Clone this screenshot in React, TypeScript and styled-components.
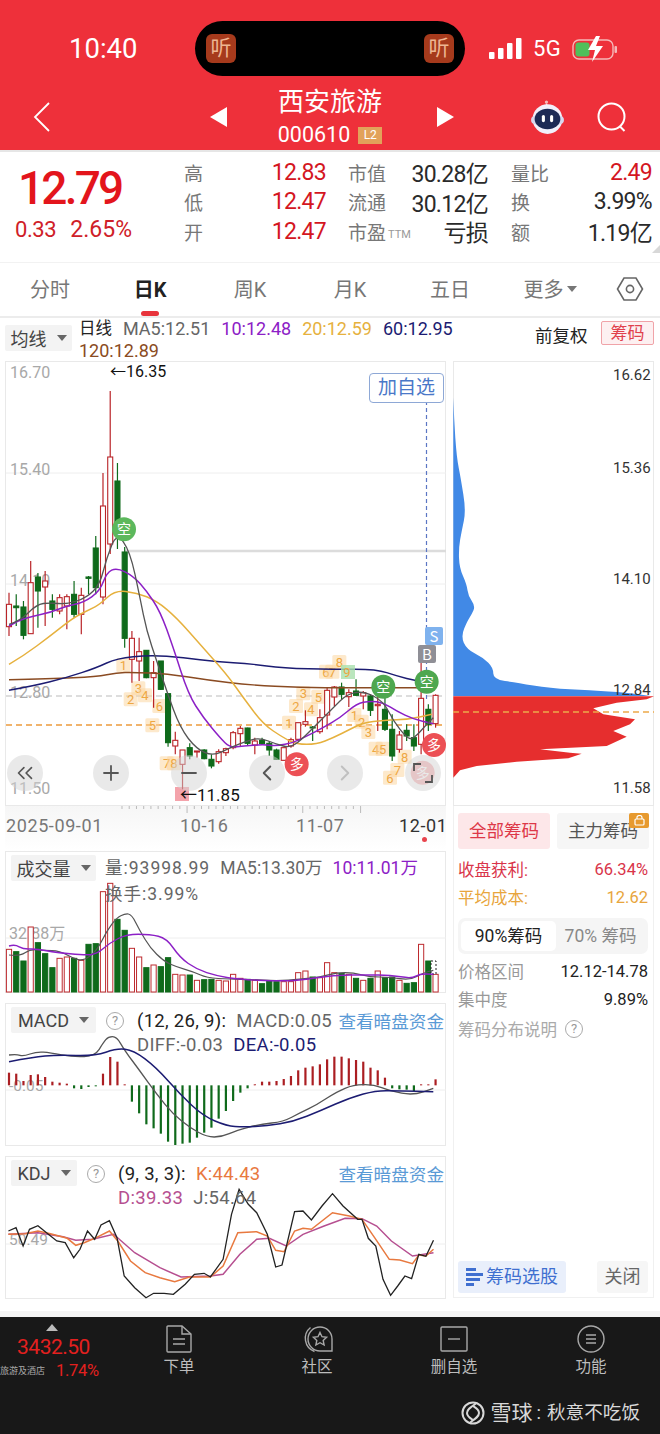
import React from "react";
import styled, { createGlobalStyle } from "styled-components";
import { ChevronLeft, ChevronRight, ChevronsLeft, Plus, Minus } from "lucide-react";

const GlobalStyle = createGlobalStyle`
  html, body { margin: 0; padding: 0; background: #fff; }
  * { box-sizing: border-box; }
  body { font-family: Roboto, "Noto Sans CJK SC", sans-serif; }
`;

const RED = "#b92428";
const GREEN = "#0f6a1b";

// [high, top, bottom, low, isRed], traced at 3x with y relative to 580
const candles: [number, number, number, number, number][] = [
  [35, 70, 137, 165, 1], [40, 75, 80, 135, 0], [60, 78, 163, 175, 0], [-60, 5, 158, 158, 1],
  [-24, -12, 30, 140, 0], [-30, 0, 18, 135, 1], [40, 60, 85, 110, 0], [40, 50, 90, 100, 1],
  [40, 47, 75, 145, 1], [0, 40, 100, 110, 0], [20, 43, 100, 160, 1], [-15, -12, -8, 40, 0],
  [-135, -99, 20, 40, 0], [-324, -225, 48, 70, 1], [-570, -372, -111, -81, 1], [-354, -300, -159, -96, 0],
  [-102, -87, 172, 200, 0], [150, 172, 235, 305, 1], [170, 212, 240, 300, 1], [208, 208, 290, 292, 0],
  [240, 275, 290, 380, 1], [240, 240, 325, 327, 0], [338, 338, 485, 497, 0], [452, 478, 495, 520, 1],
  [507, 507, 550, 625, 1], [487, 500, 525, 535, 0], [510, 510, 513, 530, 1], [505, 507, 533, 535, 0],
  [520, 535, 555, 562, 0], [505, 512, 542, 548, 1], [500, 503, 515, 525, 1], [450, 455, 500, 505, 1],
  [435, 442, 458, 495, 1], [440, 441, 487, 495, 0], [470, 480, 492, 520, 1], [470, 478, 488, 492, 0],
  [480, 487, 507, 525, 0], [503, 507, 535, 537, 0], [500, 500, 538, 538, 1], [470, 476, 495, 500, 1],
  [425, 425, 475, 480, 1], [388, 422, 430, 437, 1], [435, 438, 440, 480, 0], [385, 410, 452, 458, 1],
  [320, 328, 402, 445, 1], [315, 318, 348, 375, 1], [305, 318, 340, 355, 0], [325, 335, 347, 378, 1],
  [295, 330, 343, 345, 0], [330, 335, 345, 385, 1], [340, 345, 388, 405, 0], [345, 370, 374, 450, 1],
  [350, 385, 445, 450, 0], [400, 445, 525, 540, 0], [450, 462, 505, 515, 1], [430, 448, 465, 480, 0],
  [430, 470, 495, 510, 0], [220, 352, 490, 520, 1], [370, 385, 430, 450, 0], [340, 343, 428, 440, 1],
];

const ma5 = [27,130,60,120,110,70,150,65,200,70,260,50,300,10,320,-70,350,-145,390,-90,420,50,440,150,470,240,500,330,540,440,590,505,640,525,690,500,740,480,780,470,830,490,870,500,900,480,950,430,1000,380,1040,340,1090,330,1150,360,1180,420,1220,470,1240,475,1280,430,1300,410];
const ma10 = [27,135,50,120,100,105,150,95,200,75,250,65,300,30,320,-25,350,-40,400,-15,440,30,480,90,520,200,565,340,610,410,660,470,690,500,730,495,790,490,830,495,880,485,920,465,970,440,1020,410,1070,368,1110,360,1150,365,1190,390,1240,415,1300,428];
const ma20 = [27,250,70,225,150,165,220,110,270,85,300,70,345,28,410,35,470,60,530,110,600,190,680,280,730,350,790,430,850,470,890,490,950,490,1000,470,1050,445,1090,425,1150,418,1230,415,1295,400];
const ma60 = [27,328,100,315,200,290,290,260,350,232,450,222,550,230,650,242,750,248,850,262,1000,265,1130,265,1190,285,1250,300,1300,305];
const ma120 = [27,296,150,293,290,288,350,275,400,274,500,278,620,297,750,312,900,320,1050,320,1300,320];

const tags: [number, number, string][] = [
  [370,252,"1"],[415,322,"3"],[392,355,"2"],[435,343,"4"],[478,375,"6"],[457,433,"5"],[500,547,"7"],[522,547,"8"],
  [867,425,"1"],[888,375,"2"],[910,337,"3"],[933,385,"4"],[955,347,"5"],[978,272,"6"],[997,272,"7"],[1018,243,"8"],
  [1063,402,"1"],[1085,422,"2"],[1105,453,"3"],[1127,503,"4"],[1148,503,"5"],[1170,590,"6"],[1192,567,"7"],[1214,527,"8"],
];

const volumes: [number, number][] = [
  [295,1],[302,0],[330,0],[228,1],[275,0],[308,0],[350,0],[322,1],[318,1],[322,0],[328,1],[280,0],[278,0],[122,1],[97,1],
  [205,0],[238,0],[292,1],[318,1],[350,0],[342,1],[347,0],[320,0],[370,1],[372,1],[372,0],[388,1],[386,0],[385,0],[388,1],
  [390,1],[370,1],[382,1],[385,0],[388,1],[398,0],[390,0],[392,0],[392,1],[392,1],[365,1],[360,1],[378,0],[380,1],[335,1],
  [365,1],[367,0],[370,1],[382,0],[388,1],[382,0],[360,1],[380,0],[378,0],[388,1],[397,0],[395,0],[280,1],[330,0],[370,1],
];
const volMa5 = [27,312,60,316,90,295,130,298,180,300,220,322,250,330,290,300,320,240,350,200,375,188,395,190,420,240,450,290,490,330,530,348,580,362,620,380,690,385,750,385,830,390,900,385,960,378,1010,365,1060,365,1110,378,1170,378,1230,388,1270,365,1300,358];
const volMa10 = [27,285,45,280,70,295,110,293,170,305,250,312,290,310,330,275,380,250,450,250,500,262,540,320,590,355,650,375,720,385,830,390,900,388,1000,372,1100,372,1170,372,1235,383,1260,368,1300,370];

const macdBars = [665,668,690,672,670,678,692,695,698,712,714,708,706,668,618,632,700,752,787,820,832,848,872,882,878,875,860,845,830,803,780,750,725,712,700,692,692,690,684,675,658,650,646,640,625,617,617,622,627,632,650,658,680,712,715,716,720,700,700,685];
const diff = [27,612,50,610,70,616,110,602,150,605,220,618,285,615,310,575,325,557,350,557,375,600,420,660,470,730,520,790,570,830,620,858,665,858,710,838,780,820,850,812,900,785,950,762,1010,722,1060,702,1120,700,1170,720,1240,733,1300,712];
const dea = [27,632,100,618,170,612,285,615,350,592,400,597,470,650,540,730,610,795,680,825,730,828,800,825,880,812,960,780,1050,740,1130,718,1200,720,1300,722];

const kdjJ = [20,240,38,230,55,285,70,235,90,224,115,250,135,270,155,275,175,320,190,295,208,240,225,265,240,222,260,209,278,260,295,375,320,410,347,440,365,427,390,427,412,430,440,400,462,370,485,367,500,378,530,325,550,190,568,115,590,160,610,185,635,250,655,348,670,342,700,182,720,180,740,207,765,165,790,128,815,165,850,205,860,205,875,262,893,285,910,385,928,433,945,405,962,375,978,383,995,310,1012,316,1030,268];
const kdjK = [20,250,60,248,90,240,120,248,160,262,180,283,200,275,225,262,260,240,280,270,310,330,345,365,380,380,415,392,450,378,500,378,530,345,565,245,610,242,635,255,655,298,675,302,700,240,720,232,740,235,790,185,830,195,860,205,890,260,925,325,950,327,980,338,995,312,1012,315,1030,295];
const kdjD = [20,250,90,245,150,257,180,268,220,265,270,250,320,305,380,350,430,378,500,375,530,370,570,310,610,265,640,262,680,285,720,250,770,225,820,202,860,203,895,225,930,270,980,315,1030,305];

const chipBlue = [10,140,12,200,20,320,32,380,48,480,35,540,26,590,28,650,50,700,55,735,76,765,65,790,52,810,33,855,50,895,100,920,130,950,130,985,200,995,300,1012,420,1018,530,1025,600,1035];
const chipRed = [10,1036,612,1036,590,1045,500,1055,430,1072,460,1090,555,1105,540,1120,490,1140,530,1157,470,1185,270,1195,360,1205,395,1208,355,1222,200,1232,80,1245,30,1258,10,1280];

// turns a flat list of zoomed coordinates into page coordinates
const toXY = (list: number[], baseY: number, baseX = 0, sx = 3) => {
  const out: [number, number][] = [];
  for (let i = 0; i < list.length; i += 2) {
    out.push([baseX + list[i] / sx, baseY + list[i + 1] / 3]);
  }
  return out;
};

const toPts = (list: number[], baseY: number, baseX = 0, sx = 3) =>
  toXY(list, baseY, baseX, sx).map(([x, y]) => `${x.toFixed(1)},${y.toFixed(1)}`).join(" ");

// quadratic smoothing through midpoints, the MA lines are curves
const smooth = (list: number[], baseY: number, baseX = 0) => {
  const p = toXY(list, baseY, baseX);
  let d = `M${p[0][0].toFixed(1)} ${p[0][1].toFixed(1)}`;
  for (let i = 1; i < p.length - 1; i++) {
    const mx = (p[i][0] + p[i + 1][0]) / 2;
    const my = (p[i][1] + p[i + 1][1]) / 2;
    d += ` Q${p[i][0].toFixed(1)} ${p[i][1].toFixed(1)} ${mx.toFixed(1)} ${my.toFixed(1)}`;
  }
  const last = p[p.length - 1];
  return `${d} L${last[0].toFixed(1)} ${last[1].toFixed(1)}`;
};

const slotX = (i: number) => 9 + 7.23 * i;
const y3 = (z: number) => 580 + z / 3;

const Page = styled.div`
  width: 660px;
  height: 1434px;
  display: flex;
  flex-direction: column;
  background: #fff;
  overflow: hidden;
  color: #333;
`;

const Header = styled.header`
  height: 150px;
  background: #ee303a;
  color: #fff;
  display: flex;
  flex-direction: column;
  flex-shrink: 0;
`;

const StatusBar = styled.div`
  display: grid;
  grid-template-columns: 195px 270px 1fr;
  align-items: center;
  padding-top: 21px;
  height: 76px;
`;

const Clock = styled.div`
  padding-left: 69px;
  font-size: 27.5px;
`;

const Island = styled.div`
  height: 55px;
  border-radius: 28px;
  background: #000;
  display: flex;
  align-items: center;
  justify-content: space-between;
  padding: 0 11px;
`;

const ListenChip = styled.span`
  width: 30px;
  height: 29px;
  border-radius: 6px;
  background: #a63a1c;
  color: #eeb592;
  font-size: 21px;
  line-height: 29px;
  text-align: center;
`;

const StatusRight = styled.div`
  display: flex;
  align-items: center;
  padding-left: 24px;
  font-size: 22px;
  letter-spacing: 0.5px;
`;

const FiveG = styled.span`
  margin: 0 11px 0 11px;
`;

const NavRow = styled.div`
  flex: 1;
  display: grid;
  grid-template-columns: 235px 190px 1fr;
  align-items: center;
`;

const NavSide = styled.div<{ $end?: boolean }>`
  display: flex;
  align-items: center;
  justify-content: ${(p) => (p.$end ? "flex-start" : "space-between")};
  padding: ${(p) => (p.$end ? "8px 0 0 12px" : "8px 8px 0 32px")};
`;

const Arrow = styled.span<{ $right?: boolean }>`
  width: 0;
  height: 0;
  border-top: 10px solid transparent;
  border-bottom: 10px solid transparent;
  ${(p) => (p.$right ? "border-left: 17px solid #fff;" : "border-right: 17px solid #fff;")}
`;

const TitleBlock = styled.div`
  display: flex;
  flex-direction: column;
  align-items: center;
  margin-top: 6px;
`;

const Title = styled.div`
  font-size: 26px;
  line-height: 36px;
  white-space: nowrap;
`;

const CodeRow = styled.div`
  display: flex;
  align-items: center;
  gap: 8px;
  font-size: 21.5px;
  line-height: 26px;
  margin-top: 2px;
  white-space: nowrap;
`;

const L2 = styled.span`
  background: #e2a25a;
  color: #fff;
  width: 24px;
  height: 17px;
  line-height: 17px;
  font-size: 12px;
  text-align: center;
`;

const NavIcons = styled.div`
  display: flex;
  align-items: center;
  gap: 31px;
  margin-left: 75px;
`;

const QuoteRow = styled.section`
  height: 105px;
  border-top: 2px solid #e6e6e6;
  display: grid;
  grid-template-columns: 184px 164px 163px 1fr;
  flex-shrink: 0;
  position: relative;
`;

const PriceBlock = styled.div`
  display: flex;
  flex-direction: column;
  padding: 7px 0 0 15px;
  color: #e3151c;
`;

const BigPrice = styled.div`
  font-size: 46px;
  line-height: 58px;
  font-weight: 500;
  letter-spacing: -2.8px;
  margin-left: 3px;
`;

const Change = styled.div`
  display: flex;
  gap: 14px;
  font-size: 22px;
  line-height: 26px;
  color: #cf2028;
`;

const ChangePct = styled.span`
  font-size: 23px;
`;

const ChangeVal = styled.span`
  letter-spacing: -0.4px;
`;

const QuoteCol = styled.div`
  display: grid;
  grid-auto-rows: 29.5px;
  padding-top: 5.5px;
`;

const QuoteCell = styled.div<{ $pad?: number }>`
  display: flex;
  justify-content: space-between;
  align-items: center;
  padding-right: ${(p) => p.$pad ?? 22}px;
`;

const QuoteLabel = styled.span`
  font-size: 19px;
  color: #777;
  display: flex;
  align-items: flex-end;
`;

const Ttm = styled.span`
  font-size: 11px;
  line-height: 20px;
  margin-left: 2px;
  color: #999;
`;

const QuoteValue = styled.span<{ $red?: boolean }>`
  font-size: 23px;
  letter-spacing: -0.7px;
  color: ${(p) => (p.$red ? "#d4161f" : "#2a2a2a")};
`;

const Corner = styled.span`
  position: absolute;
  right: 0;
  bottom: 2px;
  width: 0;
  height: 0;
  border-left: 8px solid transparent;
  border-bottom: 8px solid #d8d8d8;
`;

const Tabs = styled.nav`
  margin-top: 7px;
  border-top: 1px solid #f2f2f2;
  border-bottom: 2px solid #ececec;
  height: 56px;
  display: grid;
  grid-template-columns: repeat(6, 100px) 1fr;
  align-items: center;
  flex-shrink: 0;
`;

const Tab = styled.div<{ $active?: boolean }>`
  position: relative;
  height: 100%;
  display: flex;
  align-items: center;
  justify-content: center;
  padding-bottom: 2px;
  font-size: 20px;
  color: ${(p) => (p.$active ? "#222" : "#777")};
  font-weight: ${(p) => (p.$active ? 700 : 400)};
  ${(p) =>
    p.$active &&
    `&::after { content: ""; position: absolute; left: 41px; bottom: 0; width: 18px; height: 5px; border-radius: 3px; background: #e8343c; }`}
`;

const Caret = styled.span<{ $dark?: boolean }>`
  display: inline-block;
  width: 0;
  height: 0;
  margin-left: ${(p) => (p.$dark ? 10 : 3)}px;
  border-left: 5px solid transparent;
  border-right: 5px solid transparent;
  border-top: 6px solid ${(p) => (p.$dark ? "#666" : "#777")};
`;

const Legend = styled.div`
  display: grid;
  grid-template-columns: 74px 456px 66px 1fr;
  padding-left: 5px;
  height: 43px;
  flex-shrink: 0;
`;

const Dropdown = styled.div<{ $w: number }>`
  width: ${(p) => p.$w}px;
  height: 26px;
  background: #f3f3f3;
  border-radius: 2px;
  display: flex;
  align-items: center;
  justify-content: center;
  font-size: 18px;
  color: #444;
  position: relative;
  flex-shrink: 0;
`;

const LegendDrop = styled(Dropdown)`
  margin-top: 7px;
`;

const LegendText = styled.div`
  display: flex;
  flex-wrap: wrap;
  column-gap: 11px;
  font-size: 18px;
  line-height: 21px;
`;

const Num = styled.span<{ $c?: string }>`
  color: ${(p) => p.$c ?? "#666"};
  white-space: nowrap;
`;

const LineKind = styled.span`
  color: #222;
  font-size: 16.5px;
  white-space: nowrap;
`;

const Restore = styled.div`
  font-size: 17.5px;
  color: #222;
  padding-top: 4px;
`;

const ChipBtn = styled.div`
  width: 53px;
  height: 24px;
  margin-top: 3px;
  border: 1px solid #f0a3a8;
  border-radius: 2px;
  background: #fdf0f1;
  color: #e0414c;
  font-size: 17px;
  line-height: 22px;
  text-align: center;
`;

const Board = styled.main`
  flex: 1;
  display: grid;
  grid-template-columns: 441px 201px;
  column-gap: 7px;
  padding-left: 5px;
`;

const LeftCol = styled.div`
  display: flex;
  flex-direction: column;
`;

const Panel = styled.section<{ $h: number }>`
  position: relative;
  height: ${(p) => p.$h}px;
  flex-shrink: 0;
  border: 1px solid #e9e9e9;
`;

const ChartSvg = styled.svg`
  position: absolute;
  left: -1px;
  top: -1px;
  display: block;
`;

const AxisLabel = styled.text<{ $c?: string; $s?: number }>`
  fill: ${(p) => p.$c ?? "#a8a8a8"};
  font-size: ${(p) => p.$s ?? 16}px;
  font-family: Roboto, "Noto Sans CJK SC", sans-serif;
`;

const TagLabel = styled.text`
  fill: #eea743;
  font-size: 13px;
  text-anchor: middle;
  font-family: Roboto, sans-serif;
`;

const BadgeLabel = styled.text<{ $s?: number }>`
  fill: #fff;
  font-size: ${(p) => p.$s ?? 14}px;
  text-anchor: middle;
  font-family: "Noto Sans CJK SC", sans-serif;
`;

const WatchBtn = styled.div`
  position: absolute;
  right: 1px;
  top: 11px;
  width: 75px;
  height: 30px;
  border: 1px solid #8ea8d6;
  border-radius: 4px;
  background: #fff;
  color: #4a78c8;
  font-size: 19px;
  line-height: 28px;
  text-align: center;
`;

const ZoomBar = styled.div`
  position: absolute;
  left: 1px;
  top: 393px;
  width: 434px;
  display: grid;
  grid-template-columns: 86px repeat(4, 78px) 36px;
`;

const RoundBtn = styled.div<{ $dim?: boolean }>`
  width: 36px;
  height: 36px;
  border-radius: 50%;
  background: rgba(212, 212, 212, 0.5);
  color: ${(p) => (p.$dim ? "#c0c0c0" : "#555")};
  display: flex;
  align-items: center;
  justify-content: center;
`;

const DateAxis = styled.div`
  height: 45px;
  flex-shrink: 0;
  position: relative;
  background: linear-gradient(180deg, #f6f6f6 0, #fff 100%);
`;

const TickSvg = styled.svg`
  display: block;
`;

const DateRow = styled.div`
  display: grid;
  grid-template-columns: 174px 116px 103px 1fr;
  padding-left: 1px;
  margin-top: -2px;
  font-size: 18px;
  letter-spacing: 0.6px;
  line-height: 24px;
  color: #777;
`;

const DateLabel = styled.span<{ $dark?: boolean }>`
  color: ${(p) => (p.$dark ? "#333" : "#777")};
  white-space: nowrap;
`;

const NowDot = styled.span`
  position: absolute;
  left: 417px;
  top: 31px;
  width: 5px;
  height: 5px;
  border-radius: 50%;
  background: #e8434c;
`;

const PanelHead = styled.div`
  position: relative;
  display: flex;
  padding: 3px 0 0 5px;
`;

const IndicatorText = styled.div`
  font-size: 17.5px;
  line-height: 24px;
  display: flex;
  flex-wrap: wrap;
  column-gap: 10px;
`;

const VolumeText = styled(IndicatorText)`
  padding-left: 9px;
  width: 330px;
  color: #666;
  line-height: 26px;
`;

const Spaced = styled.span`
  letter-spacing: 1px;
  white-space: nowrap;
`;

const HelpDot = styled.span`
  width: 18px;
  height: 18px;
  border: 1.5px solid #aaa;
  border-radius: 50%;
  color: #999;
  font-size: 13px;
  line-height: 15px;
  text-align: center;
  flex-shrink: 0;
`;

const HeadHelp = styled(HelpDot)`
  margin: 5px 13px 0 10px;
`;

const ParamText = styled(IndicatorText)`
  width: 205px;
  padding-top: 2px;
  font-size: 18.5px;
  letter-spacing: 0.3px;
`;

const DarkLink = styled.a`
  position: absolute;
  top: 6px;
  right: 1px;
  font-size: 17.6px;
  line-height: 24px;
  color: #5a9ad6;
`;

const GapPanel = styled(Panel)`
  margin-top: 10px;
`;

const RightCol = styled.aside`
  display: flex;
  flex-direction: column;
`;

const Controls = styled.section`
  flex: 1;
  position: relative;
  border: 1px solid #f0f0f0;
  border-top: 0;
  margin-bottom: 13px;
  padding: 7px 5px 0 4px;
  display: flex;
  flex-direction: column;
`;

const ChipTabs = styled.div`
  display: grid;
  grid-template-columns: 92px 92px;
  column-gap: 7px;
  margin-bottom: 6px;
`;

const ChipTab = styled.div<{ $on?: boolean }>`
  position: relative;
  height: 36px;
  border-radius: 3px;
  background: ${(p) => (p.$on ? "#fde7e9" : "#f6f6f6")};
  color: ${(p) => (p.$on ? "#dd3848" : "#555")};
  font-size: 17.5px;
  line-height: 36px;
  text-align: center;
`;

const Lock = styled.span`
  position: absolute;
  right: 0;
  top: 0;
  width: 20px;
  height: 15px;
  background: #e79a2f;
  border-radius: 2px;
  display: flex;
  align-items: center;
  justify-content: center;
`;

const StatRow = styled.div<{ $c: string }>`
  display: flex;
  justify-content: space-between;
  align-items: center;
  height: 28px;
  font-size: 16.5px;
  color: ${(p) => p.$c};
`;

const Segment = styled.div`
  margin-top: 7px;
  margin-bottom: 3px;
  height: 36px;
  background: #f5f5f5;
  border-radius: 7px;
  display: grid;
  grid-template-columns: 95px 1fr;
  padding: 3px;
  font-size: 17.5px;
  text-align: center;
`;

const SegmentItem = styled.div<{ $on?: boolean }>`
  border-radius: 5px;
  background: ${(p) => (p.$on ? "#fff" : "transparent")};
  color: ${(p) => (p.$on ? "#222" : "#888")};
  line-height: 30px;
`;

const InfoRow = styled.div`
  display: flex;
  justify-content: space-between;
  align-items: center;
  height: 28px;
  font-size: 16.5px;
  color: #222;
`;

const InfoLabel = styled.span`
  color: #999;
`;

const NoteRow = styled.div`
  display: flex;
  align-items: center;
  gap: 8px;
  height: 30px;
  margin-top: 1px;
  font-size: 16.5px;
  color: #aaa;
`;

const ControlsFoot = styled.div`
  margin-top: auto;
  margin-bottom: 4px;
  display: flex;
  justify-content: space-between;
`;

const PickBtn = styled.div`
  width: 108px;
  height: 32px;
  background: #e9effb;
  border-radius: 3px;
  color: #3f6fd0;
  font-size: 18px;
  line-height: 32px;
  display: flex;
  align-items: center;
  justify-content: center;
  gap: 2px;
`;

const CloseBtn = styled.div`
  width: 51px;
  height: 32px;
  background: #f6f6f6;
  border-radius: 3px;
  color: #666;
  font-size: 18px;
  line-height: 32px;
  text-align: center;
`;

const BottomGap = styled.div`
  height: 6px;
  flex-shrink: 0;
  background: #f4f4f4;
`;

const BottomBar = styled.footer`
  height: 117px;
  flex-shrink: 0;
  background: #181818;
  color: #bdbdbd;
`;

const BarGrid = styled.div`
  display: grid;
  grid-template-columns: 110px 138px 138px 136px 1fr;
  height: 74px;
`;

const IndexCell = styled.div`
  display: flex;
  flex-direction: column;
  align-items: center;
  padding-top: 7px;
`;

const IndexUp = styled.span`
  width: 0;
  height: 0;
  border-left: 6px solid transparent;
  border-right: 6px solid transparent;
  border-bottom: 7px solid #bbb;
  margin-left: -6px;
`;

const IndexValue = styled.div`
  font-size: 21px;
  line-height: 26px;
  color: #e3201f;
  margin-top: 3px;
  margin-left: -3px;
  letter-spacing: -0.5px;
`;

const IndexFoot = styled.div`
  display: flex;
  align-items: center;
  gap: 11px;
  align-self: flex-start;
  margin-top: 1px;
`;

const IndexName = styled.span`
  font-size: 9px;
  color: #aaa;
  white-space: nowrap;
`;

const IndexPct = styled.span`
  font-size: 16.5px;
  color: #e3201f;
  letter-spacing: -0.3px;
`;

const BarItem = styled.div`
  display: flex;
  flex-direction: column;
  align-items: center;
  padding-top: 8px;
  font-size: 15.5px;
  line-height: 22px;
  gap: 3px;
`;

const BarIconBox = styled.div`
  height: 28px;
  display: flex;
  align-items: center;
`;

const Watermark = styled.div`
  display: flex;
  justify-content: flex-end;
  align-items: center;
  padding: 9px 20px 0 0;
  font-size: 18.6px;
  line-height: 26px;
  color: #d8d8d8;
`;

const Brand = styled.span`
  font-size: 21px;
  margin-left: 6px;
`;

const WatermarkSep = styled.span`
  margin: 0 6px 0 4px;
`;

const Robot = () => (
  <svg width="37" height="36" viewBox="0 0 36 34">
    <circle cx="17" cy="2.5" r="1.6" fill="#f4b8b8" />
    <path d="M17 4v3" stroke="#f4d4d4" strokeWidth="1.4" />
    <circle cx="18" cy="19" r="14.5" fill="#f1f0fb" />
    <rect x="2" y="16" width="32" height="8" rx="4" fill="#d9d8ee" />
    <ellipse cx="18" cy="19" rx="12.500" ry="10" fill="#1d2a55" />
    <rect x="12.500" y="15" width="3" height="7" rx="1.500" fill="#fff" />
    <rect x="20.500" y="15" width="3" height="7" rx="1.500" fill="#fff" />
  </svg>
);

const SearchIcon = () => (
  <svg width="31" height="30" viewBox="0 0 31 30" fill="none" stroke="#fff" strokeWidth="2">
    <circle cx="14.500" cy="14.500" r="13" />
    <path d="M23 24.500l4.500 4.500" />
  </svg>
);

const BackIcon = () => (
  <svg width="18" height="32" viewBox="0 0 18 32" fill="none" stroke="#fff" strokeWidth="1.800">
    <path d="M17 2L3 16l14 14" />
  </svg>
);

const SignalIcon = () => (
  <svg width="33" height="21" viewBox="0 0 33 21" fill="#fff">
    <rect x="0" y="14" width="5.500" height="7" rx="1" />
    <rect x="9" y="10" width="5.500" height="11" rx="1" />
    <rect x="18" y="5" width="5.500" height="16" rx="1" />
    <rect x="27" y="0" width="5.500" height="21" rx="1" />
  </svg>
);

const BatteryIcon = () => (
  <svg width="46" height="28" viewBox="0 0 46 28">
    <rect x="1" y="5" width="40" height="19" rx="6" fill="none" stroke="#f5b8b8" strokeWidth="1.400" />
    <rect x="3.500" y="7.500" width="14" height="14" rx="3" fill="#4fc05a" />
    <rect x="42.500" y="11" width="2.500" height="7" rx="1" fill="#f5b8b8" />
    <path d="M24 1l-8 14h7l-3 12 11-16h-7l4-10z" fill="#fff" />
  </svg>
);

const HexIcon = () => (
  <svg width="28" height="26" viewBox="0 0 28 26" fill="none" stroke="#666" strokeWidth="1.600">
    <path d="M8 2h12l6.500 11L20 24H8L1.500 13z" />
    <circle cx="14" cy="13" r="3.600" />
  </svg>
);

const Tag = ({ x, y, t }: { x: number; y: number; t: string }) => (
  <g>
    <rect x={x / 3 - 7} y={y3(y) - 7} width="14" height="14" rx="1.500" fill="#fbd39a" opacity="0.5" />
    <TagLabel x={x / 3} y={y3(y) + 5}>{t}</TagLabel>
  </g>
);

const Badge = ({ x, y, c, t, o = 1 }: { x: number; y: number; c: string; t: string; o?: number }) => (
  <g opacity={o}>
    <circle cx={x / 3} cy={y3(y)} r="12" fill={c} />
    <BadgeLabel x={x / 3} y={y3(y) + 5}>{t}</BadgeLabel>
  </g>
);

const MainChart = () => (
  <ChartSvg width="441" height="445" viewBox="5 360 441 445">
    <line x1="6" x2="446" y1="472" y2="472" stroke="#eee" />
    <line x1="6" x2="446" y1="583" y2="583" stroke="#eee" />
    <line x1="125" x2="446" y1="550" y2="550" stroke="#dcdcdc" strokeWidth="2.500" />
    <line x1="6" x2="446" y1="695" y2="695" stroke="#bbb" strokeDasharray="6 4" />
    <line x1="6" x2="446" y1="724" y2="724" stroke="#ec9a3c" strokeWidth="1.400" strokeDasharray="6 4" />
    <line x1="426.500" x2="426.500" y1="400" y2="700" stroke="#5b76c4" strokeWidth="1.200" strokeDasharray="4 3" />
    <AxisLabel x="10" y="377">16.70</AxisLabel>
    <AxisLabel x="10" y="474">15.40</AxisLabel>
    <AxisLabel x="10" y="585">14.10</AxisLabel>
    <AxisLabel x="10" y="697">12.80</AxisLabel>
    <AxisLabel x="10" y="793">11.50</AxisLabel>
    <AxisLabel x="110" y="376" $c="#111" $s={16}>←16.35</AxisLabel>
    {tags.map(([x, y, t], i) => <Tag key={i} x={x} y={y} t={t} />)}
    <rect x="175" y="786" width="14" height="14" fill="#f4a3ab" />
    {candles.map(([h, t, b, l, up], i) => {
      const x = slotX(i);
      const color = up ? RED : GREEN;
      return (
        <g key={i}>
          <line x1={x} x2={x} y1={y3(h)} y2={y3(l)} stroke={color} strokeWidth="1.200" />
          <rect
            x={x - 2.500}
            y={y3(t)}
            width="5"
            height={Math.max(1, (b - t) / 3)}
            fill={up ? "#fff" : color}
            stroke={color}
            strokeWidth="1.100"
          />
        </g>
      );
    })}
    <path d={smooth(ma120, 580)} fill="none" stroke="#8a4b22" strokeWidth="1.400" />
    <path d={smooth(ma60, 580)} fill="none" stroke="#1c1c72" strokeWidth="1.400" />
    <path d={smooth(ma20, 580)} fill="none" stroke="#e6b13e" strokeWidth="1.500" />
    <path d={smooth(ma10, 580)} fill="none" stroke="#8c20c6" strokeWidth="1.500" />
    <path d={smooth(ma5, 580)} fill="none" stroke="#555" strokeWidth="1.300" />
    <Badge x={372} y={-155} c="#5cb85c" t="空" />
    <Badge x={1150} y={317} c="#4ea74f" t="空" />
    <Badge x={1280} y={302} c="#4ea74f" t="空" />
    <Badge x={890} y={550} c="#ec5055" t="多" />
    <Badge x={1302} y={492} c="#ec5055" t="多" />
    <Badge x={1268} y={575} c="#ec5055" t="多" o={0.4} />
    <rect x="341" y="664" width="14" height="14" fill="#a9e0ad" opacity="0.8" />
    <TagLabel x="347" y="676">9</TagLabel>
    <rect x="425" y="626" width="18" height="18" rx="2" fill="#7fb2ee" />
    <BadgeLabel x="434" y="641" $s={15}>S</BadgeLabel>
    <rect x="418" y="644" width="18" height="18" rx="2" fill="#8f8f96" />
    <BadgeLabel x="427" y="659" $s={15}>B</BadgeLabel>
    <AxisLabel x="180" y="800" $c="#111" $s={17}>←11.85</AxisLabel>
  </ChartSvg>
);

const VolumeChart = () => (
  <ChartSvg width="441" height="142" viewBox="5 850 441 142">
    <line x1="6" x2="446" y1="937" y2="937" stroke="#eee" />
    <AxisLabel x="9" y="938" $s={16}>32.88万</AxisLabel>
    {volumes.map(([top, up], i) => {
      const y = 850 + top / 3;
      return (
        <rect
          key={i}
          x={slotX(i) - 2.600}
          y={y}
          width="5.200"
          height={991 - y}
          fill={up ? "#fff" : GREEN}
          stroke={up ? "#bd2a2e" : GREEN}
          strokeWidth="1"
        />
      );
    })}
    <rect x="431" y="960" width="5" height="13" fill="#fff" stroke="#222" strokeWidth="1" strokeDasharray="2 2" />
    <path d={smooth(volMa5, 850)} fill="none" stroke="#555" strokeWidth="1.200" />
    <path d={smooth(volMa10, 850)} fill="none" stroke="#8c20c6" strokeWidth="1.400" />
  </ChartSvg>
);

const MacdChart = () => (
  <ChartSvg width="441" height="143" viewBox="5 1002 441 143">
    <line x1="6" x2="446" y1="1089" y2="1089" stroke="#eee" />
    <AxisLabel x="9" y="1090" $s={15.500}>-0.05</AxisLabel>
    {macdBars.map((z, i) => {
      const y = 850 + z / 3;
      const base = 850 + 703 / 3;
      return (
        <line
          key={i}
          x1={slotX(i)}
          x2={slotX(i)}
          y1={Math.min(y, base)}
          y2={Math.max(y, base)}
          stroke={z < 703 ? "#ab1e22" : GREEN}
          strokeWidth="2.200"
        />
      );
    })}
    <path d={smooth(diff, 850)} fill="none" stroke="#555" strokeWidth="1.300" />
    <path d={smooth(dea, 850)} fill="none" stroke="#1c1c72" strokeWidth="1.500" />
  </ChartSvg>
);

const KdjChart = () => (
  <ChartSvg width="441" height="143" viewBox="5 1155 441 143">
    <line x1="6" x2="446" y1="1243" y2="1243" stroke="#eee" />
    <AxisLabel x="9" y="1244" $s={15.500}>50.49</AxisLabel>
    <polyline points={toPts(kdjD, 1150, 0, 2.376)} fill="none" stroke="#b64f90" strokeWidth="1.500" />
    <polyline points={toPts(kdjK, 1150, 0, 2.376)} fill="none" stroke="#e8793f" strokeWidth="1.500" />
    <polyline points={toPts(kdjJ, 1150, 0, 2.376)} fill="none" stroke="#222" strokeWidth="1.300" />
  </ChartSvg>
);

const ChipChart = () => (
  <ChartSvg width="201" height="445" viewBox="453 360 201 445">
    <path d={`${smooth(chipBlue, 350, 450)} L453.300 695 Z`} fill="#4189e6" />
    <polygon points={toPts(chipRed, 350, 450)} fill="#e62e2e" />
    <line x1="453" x2="654" y1="711" y2="711" stroke="#eda94a" strokeWidth="1.400" strokeDasharray="6 4" />
    <AxisLabel x="613" y="379" $c="#333" $s={15}>16.62</AxisLabel>
    <AxisLabel x="613" y="472" $c="#333" $s={15}>15.36</AxisLabel>
    <AxisLabel x="613" y="583" $c="#333" $s={15}>14.10</AxisLabel>
    <AxisLabel x="613" y="694" $c="#333" $s={15}>12.84</AxisLabel>
    <AxisLabel x="613" y="792" $c="#333" $s={15}>11.58</AxisLabel>
  </ChartSvg>
);

const DocIcon = () => (
  <svg width="26" height="28" viewBox="0 0 26 28" fill="none" stroke="#a8a8a8" strokeWidth="1.400">
    <path d="M2 1h14l9 8v17a1 1 0 0 1-1 1H2a1 1 0 0 1-1-1V2a1 1 0 0 1 1-1z" />
    <path d="M16 1v8h9M7 14h12M7 19h12" />
  </svg>
);

const CommunityIcon = () => (
  <svg width="31" height="28" viewBox="0 0 31 28" fill="none" stroke="#a8a8a8" strokeWidth="1.400">
    <path d="M18 2a12 12 0 0 1 12 12v12H18a12 12 0 0 1 0-24z" />
    <path d="M8.500 2.500a14 14 0 0 0 4 24" />
    <path d="M18 7.500l2 4.200 4.600.6-3.400 3.200.9 4.500-4.100-2.300-4.100 2.300.9-4.500-3.400-3.200 4.600-.6z" />
  </svg>
);

const RemoveIcon = () => (
  <svg width="28" height="26" viewBox="0 0 28 26" fill="none" stroke="#a8a8a8" strokeWidth="1.400">
    <rect x="1" y="1" width="26" height="24" rx="1" />
    <path d="M8 13h12" />
  </svg>
);

const MenuIcon = () => (
  <svg width="28" height="28" viewBox="0 0 28 28" fill="none" stroke="#a8a8a8" strokeWidth="1.400">
    <circle cx="14" cy="14" r="13" />
    <path d="M9 10h10M9 14h10M9 18h10" />
  </svg>
);

const SnowLogo = () => (
  <svg width="24" height="26" viewBox="0 0 24 26" fill="none" stroke="#d8d8d8" strokeWidth="2">
    <circle cx="12" cy="13" r="10.500" />
    <path d="M15 3.500C10 7 6 9.500 6 13s3 5 6 7" />
    <path d="M9 22.500C14 19 18 16.500 18 13s-3-5-6-7" />
  </svg>
);

const PickIcon = () => (
  <svg width="18" height="20" viewBox="0 0 18 20" fill="#3f6fd0">
    <rect x="0" y="1" width="10" height="3" />
    <rect x="0" y="6" width="17" height="3" />
    <rect x="0" y="11" width="14" height="3" />
    <rect x="0" y="16" width="8" height="3" />
  </svg>
);

const LockIcon = () => (
  <svg width="11" height="11" viewBox="0 0 11 11" fill="none" stroke="#fff" strokeWidth="1.200">
    <rect x="1" y="4" width="9" height="6" rx="1" />
    <path d="M3 4V2.500a2.500 2 0 0 1 5 0V4" />
  </svg>
);

const quoteCols = [
  { pad: 22, rows: [["高", "12.83", true], ["低", "12.47", true], ["开", "12.47", true]] },
  { pad: 23, rows: [["市值", "30.28亿", false], ["流通", "30.12亿", false], ["市盈", "亏损", false]] },
  { pad: 8, rows: [["量比", "2.49", true], ["换", "3.99%", false], ["额", "1.19亿", false]] },
] as const;

const tabNames = ["分时", "日K", "周K", "月K", "五日"];
const ticks = Array.from({ length: 34 }, (_, i) => 117 + 7.23 * i);

export default function App() {
  return (
    <>
      <GlobalStyle />
      <Page>
        <Header>
          <StatusBar>
            <Clock>10:40</Clock>
            <Island>
              <ListenChip>听</ListenChip>
              <ListenChip>听</ListenChip>
            </Island>
            <StatusRight>
              <SignalIcon />
              <FiveG>5G</FiveG>
              <BatteryIcon />
            </StatusRight>
          </StatusBar>
          <NavRow>
            <NavSide>
              <BackIcon />
              <Arrow />
            </NavSide>
            <TitleBlock>
              <Title>西安旅游</Title>
              <CodeRow>
                000610<L2>L2</L2>
              </CodeRow>
            </TitleBlock>
            <NavSide $end>
              <Arrow $right />
              <NavIcons>
                <Robot />
                <SearchIcon />
              </NavIcons>
            </NavSide>
          </NavRow>
        </Header>

        <QuoteRow>
          <PriceBlock>
            <BigPrice>12.79</BigPrice>
            <Change>
              <ChangeVal>0.33</ChangeVal>
              <ChangePct>2.65%</ChangePct>
            </Change>
          </PriceBlock>
          {quoteCols.map((col) => (
            <QuoteCol key={col.rows[0][0]}>
              {col.rows.map(([label, value, red]) => (
                <QuoteCell key={label} $pad={col.pad}>
                  <QuoteLabel>
                    {label}
                    {label === "市盈" && <Ttm>TTM</Ttm>}
                  </QuoteLabel>
                  <QuoteValue $red={red}>{value}</QuoteValue>
                </QuoteCell>
              ))}
            </QuoteCol>
          ))}
          <Corner />
        </QuoteRow>

        <Tabs>
          {tabNames.map((t) => (
            <Tab key={t} $active={t === "日K"}>{t}</Tab>
          ))}
          <Tab>
            更多<Caret />
          </Tab>
          <Tab>
            <HexIcon />
          </Tab>
        </Tabs>

        <Legend>
          <LegendDrop $w={67}>
            均线<Caret $dark />
          </LegendDrop>
          <LegendText>
            <LineKind>日线</LineKind>
            <Num>MA5:12.51</Num>
            <Num $c="#8c20c6">10:12.48</Num>
            <Num $c="#e6b13e">20:12.59</Num>
            <Num $c="#1c1c72">60:12.95</Num>
            <Num $c="#8a4b22">120:12.89</Num>
          </LegendText>
          <Restore>前复权</Restore>
          <ChipBtn>筹码</ChipBtn>
        </Legend>

        <Board>
          <LeftCol>
            <Panel $h={445}>
              <MainChart />
              <WatchBtn>加自选</WatchBtn>
              <ZoomBar>
                <RoundBtn><ChevronsLeft size={26} strokeWidth={1.5} /></RoundBtn>
                <RoundBtn><Plus size={24} strokeWidth={1.8} /></RoundBtn>
                <RoundBtn><Minus size={24} strokeWidth={1.8} /></RoundBtn>
                <RoundBtn><ChevronLeft size={26} strokeWidth={1.8} /></RoundBtn>
                <RoundBtn $dim><ChevronRight size={26} strokeWidth={1.8} /></RoundBtn>
                <RoundBtn>
                  <svg width="20" height="20" viewBox="0 0 20 20" fill="none" stroke="#555" strokeWidth="1.800">
                    <path d="M1 8V1h7M19 12v7h-7" />
                  </svg>
                </RoundBtn>
              </ZoomBar>
            </Panel>
            <DateAxis>
              <TickSvg width="441" height="10" viewBox="0 0 441 10">
                {ticks.map((x, i) => (
                  <line
                    key={x}
                    x1={x}
                    x2={x}
                    y1="0"
                    y2={i % 16 === 9 || i === 33 ? 7 : 3}
                    stroke="#bbb"
                  />
                ))}
              </TickSvg>
              <DateRow>
                <DateLabel>2025-09-01</DateLabel>
                <DateLabel>10-16</DateLabel>
                <DateLabel>11-07</DateLabel>
                <DateLabel $dark>12-01</DateLabel>
              </DateRow>
              <NowDot />
            </DateAxis>

            <Panel $h={142}>
              <VolumeChart />
              <PanelHead>
                <Dropdown $w={85}>
                  成交量<Caret $dark />
                </Dropdown>
                <VolumeText>
                  <Spaced>量:93998.99</Spaced>
                  <span>MA5:13.30万</span>
                  <Num $c="#8c20c6">10:11.01万</Num>
                  <Spaced>换手:3.99%</Spaced>
                </VolumeText>
              </PanelHead>
            </Panel>

            <GapPanel $h={143}>
              <MacdChart />
              <PanelHead>
                <Dropdown $w={85}>
                  MACD<Caret $dark />
                </Dropdown>
                <HeadHelp>?</HeadHelp>
                <ParamText>
                  <Num $c="#222">(12, 26, 9):</Num>
                  <Num>MACD:0.05</Num>
                  <Num>DIFF:-0.03</Num>
                  <Num $c="#1c1c72">DEA:-0.05</Num>
                </ParamText>
                <DarkLink>查看暗盘资金</DarkLink>
              </PanelHead>
            </GapPanel>

            <GapPanel $h={143}>
              <KdjChart />
              <PanelHead>
                <Dropdown $w={66}>
                  KDJ<Caret $dark />
                </Dropdown>
                <HeadHelp>?</HeadHelp>
                <ParamText>
                  <Num $c="#222">(9, 3, 3):</Num>
                  <Num $c="#e8793f">K:44.43</Num>
                  <Num $c="#b64f90">D:39.33</Num>
                  <Num>J:54.64</Num>
                </ParamText>
                <DarkLink>查看暗盘资金</DarkLink>
              </PanelHead>
            </GapPanel>
          </LeftCol>

          <RightCol>
            <Panel $h={445}>
              <ChipChart />
            </Panel>
            <Controls>
              <ChipTabs>
                <ChipTab $on>全部筹码</ChipTab>
                <ChipTab>
                  主力筹码
                  <Lock><LockIcon /></Lock>
                </ChipTab>
              </ChipTabs>
              <StatRow $c="#d9344a">
                <span>收盘获利:</span>
                <span>66.34%</span>
              </StatRow>
              <StatRow $c="#e8a53c">
                <span>平均成本:</span>
                <span>12.62</span>
              </StatRow>
              <Segment>
                <SegmentItem $on>90%筹码</SegmentItem>
                <SegmentItem>70% 筹码</SegmentItem>
              </Segment>
              <InfoRow>
                <InfoLabel>价格区间</InfoLabel>
                <span>12.12-14.78</span>
              </InfoRow>
              <InfoRow>
                <InfoLabel>集中度</InfoLabel>
                <span>9.89%</span>
              </InfoRow>
              <NoteRow>
                筹码分布说明
                <HelpDot>?</HelpDot>
              </NoteRow>
              <ControlsFoot>
                <PickBtn>
                  <PickIcon />
                  筹码选股
                </PickBtn>
                <CloseBtn>关闭</CloseBtn>
              </ControlsFoot>
            </Controls>
          </RightCol>
        </Board>

        <BottomGap />
        <BottomBar>
          <BarGrid>
            <IndexCell>
              <IndexUp />
              <IndexValue>3432.50</IndexValue>
              <IndexFoot>
                <IndexName>旅游及酒店</IndexName>
                <IndexPct>1.74%</IndexPct>
              </IndexFoot>
            </IndexCell>
            <BarItem><BarIconBox><DocIcon /></BarIconBox>下单</BarItem>
            <BarItem><BarIconBox><CommunityIcon /></BarIconBox>社区</BarItem>
            <BarItem><BarIconBox><RemoveIcon /></BarIconBox>删自选</BarItem>
            <BarItem><BarIconBox><MenuIcon /></BarIconBox>功能</BarItem>
          </BarGrid>
          <Watermark>
            <SnowLogo />
            <Brand>雪球</Brand>
            <WatermarkSep>:</WatermarkSep>
            秋意不吃饭
          </Watermark>
        </BottomBar>
      </Page>
    </>
  );
}
